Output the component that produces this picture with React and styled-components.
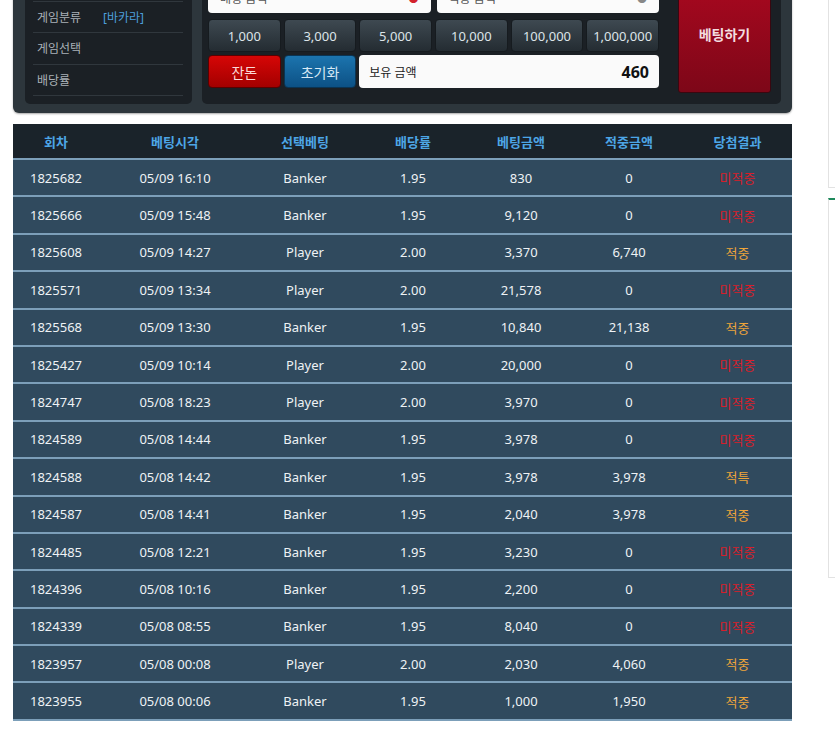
import React from "react";
import styled, { createGlobalStyle } from "styled-components";

const GlobalStyle = createGlobalStyle`
  body {
    margin: 0;
    background: #ffffff;
    overflow: hidden;
    font-family: "Noto Sans", "Noto Sans CJK KR", sans-serif;
  }
`;

const Page = styled.div`
  display: flex;
  align-items: flex-start;
  margin-top: -39px;
  width: 835px;
`;

const Main = styled.div`
  margin-left: 13px;
  width: 779px;
  flex-shrink: 0;
`;

const Sidebar = styled.div`
  margin-left: 36px;
  width: 300px;
  flex-shrink: 0;
  display: flex;
  flex-direction: column;
  gap: 10px;
`;

const SideBox = styled.div`
  height: ${(p) => p.$h}px;
  border: 1px solid #e2e2e2;
  border-top: ${(p) => (p.$accent ? "2px solid #1f8a5c" : "1px solid #e2e2e2")};
  box-sizing: border-box;
  background: #fff;
`;

const BetPanel = styled.div`
  display: flex;
  gap: 10px;
  padding: 9px 11px 9px 12px;
  background: #2d363c;
  border-radius: 0 0 6px 6px;
  box-shadow: 0 1px 2px rgba(0, 0, 0, 0.35);
`;

const InfoPanel = styled.div`
  width: 167px;
  flex-shrink: 0;
  box-sizing: border-box;
  padding: 0 9px 8px 8px;
  background: #1b2025;
  border-radius: 5px;
`;

const InfoRow = styled.div`
  display: flex;
  align-items: center;
  height: 30.5px;
  padding-left: 4px;
  border-bottom: 1px solid #30373d;
  font-size: 12px;
  color: #aab1b7;
`;

const InfoLabel = styled.span`
  width: 66px;
`;

const InfoValue = styled.span`
  color: #4d9fdc;
`;

const ControlPanel = styled.div`
  flex: 1;
  display: grid;
  grid-template-columns: 451px 93px;
  column-gap: 19px;
  padding: 13px 9px 11px 6px;
  background: #1b2025;
  border-radius: 5px;
`;

const Controls = styled.div`
  display: flex;
  flex-direction: column;
  gap: 3px;
  padding-bottom: 5px;
`;

const InputRow = styled.div`
  display: grid;
  grid-template-columns: 1fr 1fr;
  gap: 6px;
  margin-bottom: 3px;
`;

const Field = styled.div`
  height: 30px;
  background: #fbfbfb;
  border-radius: 4px;
  display: flex;
  align-items: center;
  justify-content: space-between;
  padding: 0 12px;
  font-size: 12px;
  color: #555;
`;

const Mark = styled.span`
  color: ${(p) => p.$color || "#d3222c"};
  font-size: 10px;
`;

const ButtonGrid = styled.div`
  display: grid;
  grid-template-columns: repeat(6, 1fr);
  gap: 3px;
  height: 33px;
`;

const variants = {
  dark: ["#3e4951", "#242c32", "#dde4e8", "#161b1f"],
  red: ["#d60606", "#a30000", "#fbd9d9", "#5a0000"],
  blue: ["#1c74ae", "#0c5185", "#d7e9f6", "#0a3453"],
};

const ChipButton = styled.button`
  border: 1px solid ${(p) => variants[p.$tone][3]};
  border-radius: 4px;
  background: linear-gradient(${(p) => variants[p.$tone][0]}, ${(p) => variants[p.$tone][1]});
  color: ${(p) => variants[p.$tone][2]};
  font-family: "Noto Sans", "Noto Sans CJK KR", sans-serif;
  font-size: ${(p) => (p.$tone === "dark" ? 13 : 14)}px;
  padding: 0;
  cursor: pointer;
`;

const Balance = styled.div`
  grid-column: span 4;
  background: #fafafa;
  border-radius: 4px;
  display: flex;
  align-items: center;
  justify-content: space-between;
  padding: 0 10px;
  font-size: 12px;
  color: #222;
`;

const BalanceValue = styled.span`
  font-size: 16px;
  font-weight: 700;
  color: #111;
`;

const BetButton = styled.button`
  align-self: stretch;
  border: 1px solid #3a0710;
  border-radius: 3px;
  padding: 0 0 8px;
  background: linear-gradient(#a8081f, #7d0718);
  color: #f3dde0;
  font-family: "Noto Sans CJK KR", sans-serif;
  font-size: 14px;
  font-weight: 700;
  cursor: pointer;
`;

const Table = styled.table`
  margin-top: 11px;
  width: 779px;
  border-collapse: collapse;
  table-layout: fixed;
  font-size: 13px;
`;

const HeadCell = styled.th`
  height: 34px;
  padding: 0;
  background: #1a232a;
  color: #4da6e6;
  font-family: "Noto Sans CJK KR", sans-serif;
  font-weight: 700;
  font-size: 13px;
  text-align: center;
`;

const Row = styled.tr`
  background: #304a5e;
  border-top: 2px solid #7c9fb9;
  &:last-child {
    border-bottom: 2px solid #7c9fb9;
  }
`;

const Cell = styled.td`
  height: 35.4px;
  padding: 0;
  text-align: center;
  color: ${(p) => (p.$result === "miss" ? "#d81e2a" : p.$result === "hit" ? "#eda53a" : "#eef2f5")};
`;

const widths = [86, 152, 108, 108, 108, 108, 109];
const headers = ["회차", "베팅시각", "선택베팅", "배당률", "베팅금액", "적중금액", "당첨결과"];

const rows = [
  ["1825682", "05/09 16:10", "Banker", "1.95", "830", "0", "미적중"],
  ["1825666", "05/09 15:48", "Banker", "1.95", "9,120", "0", "미적중"],
  ["1825608", "05/09 14:27", "Player", "2.00", "3,370", "6,740", "적중"],
  ["1825571", "05/09 13:34", "Player", "2.00", "21,578", "0", "미적중"],
  ["1825568", "05/09 13:30", "Banker", "1.95", "10,840", "21,138", "적중"],
  ["1825427", "05/09 10:14", "Player", "2.00", "20,000", "0", "미적중"],
  ["1824747", "05/08 18:23", "Player", "2.00", "3,970", "0", "미적중"],
  ["1824589", "05/08 14:44", "Banker", "1.95", "3,978", "0", "미적중"],
  ["1824588", "05/08 14:42", "Banker", "1.95", "3,978", "3,978", "적특"],
  ["1824587", "05/08 14:41", "Banker", "1.95", "2,040", "3,978", "적중"],
  ["1824485", "05/08 12:21", "Banker", "1.95", "3,230", "0", "미적중"],
  ["1824396", "05/08 10:16", "Banker", "1.95", "2,200", "0", "미적중"],
  ["1824339", "05/08 08:55", "Banker", "1.95", "8,040", "0", "미적중"],
  ["1823957", "05/08 00:08", "Player", "2.00", "2,030", "4,060", "적중"],
  ["1823955", "05/08 00:06", "Banker", "1.95", "1,000", "1,950", "적중"],
];

const chips = ["1,000", "3,000", "5,000", "10,000", "100,000", "1,000,000"];

export default function App() {
  return (
    <>
      <GlobalStyle />
      <Page>
        <Main>
          <BetPanel>
            <InfoPanel>
              <InfoRow>
                <InfoLabel>게임종류</InfoLabel>
              </InfoRow>
              <InfoRow>
                <InfoLabel>게임분류</InfoLabel>
                <InfoValue>[바카라]</InfoValue>
              </InfoRow>
              <InfoRow>
                <InfoLabel>게임선택</InfoLabel>
              </InfoRow>
              <InfoRow>
                <InfoLabel>배당률</InfoLabel>
              </InfoRow>
            </InfoPanel>
            <ControlPanel>
              <Controls>
                <InputRow>
                  <Field>
                    배팅 금액<Mark>●</Mark>
                  </Field>
                  <Field>
                    적중 금액<Mark $color="#888">●</Mark>
                  </Field>
                </InputRow>
                <ButtonGrid>
                  {chips.map((c) => (
                    <ChipButton key={c} $tone="dark">
                      {c}
                    </ChipButton>
                  ))}
                </ButtonGrid>
                <ButtonGrid>
                  <ChipButton $tone="red">잔돈</ChipButton>
                  <ChipButton $tone="blue">초기화</ChipButton>
                  <Balance>
                    보유 금액<BalanceValue>460</BalanceValue>
                  </Balance>
                </ButtonGrid>
              </Controls>
              <BetButton>베팅하기</BetButton>
            </ControlPanel>
          </BetPanel>
          <Table>
            <colgroup>
              {widths.map((w, i) => (
                <col key={i} style={{ width: w }} />
              ))}
            </colgroup>
            <thead>
              <tr>
                {headers.map((h) => (
                  <HeadCell key={h}>{h}</HeadCell>
                ))}
              </tr>
            </thead>
            <tbody>
              {rows.map((r) => (
                <Row key={r[0]}>
                  {r.map((v, i) => (
                    <Cell
                      key={i}
                      $result={i === 6 ? (v === "미적중" ? "miss" : "hit") : undefined}
                    >
                      {v}
                    </Cell>
                  ))}
                </Row>
              ))}
            </tbody>
          </Table>
        </Main>
        <Sidebar>
          <SideBox $h={227} />
          <SideBox $h={380} $accent />
        </Sidebar>
      </Page>
    </>
  );
}
